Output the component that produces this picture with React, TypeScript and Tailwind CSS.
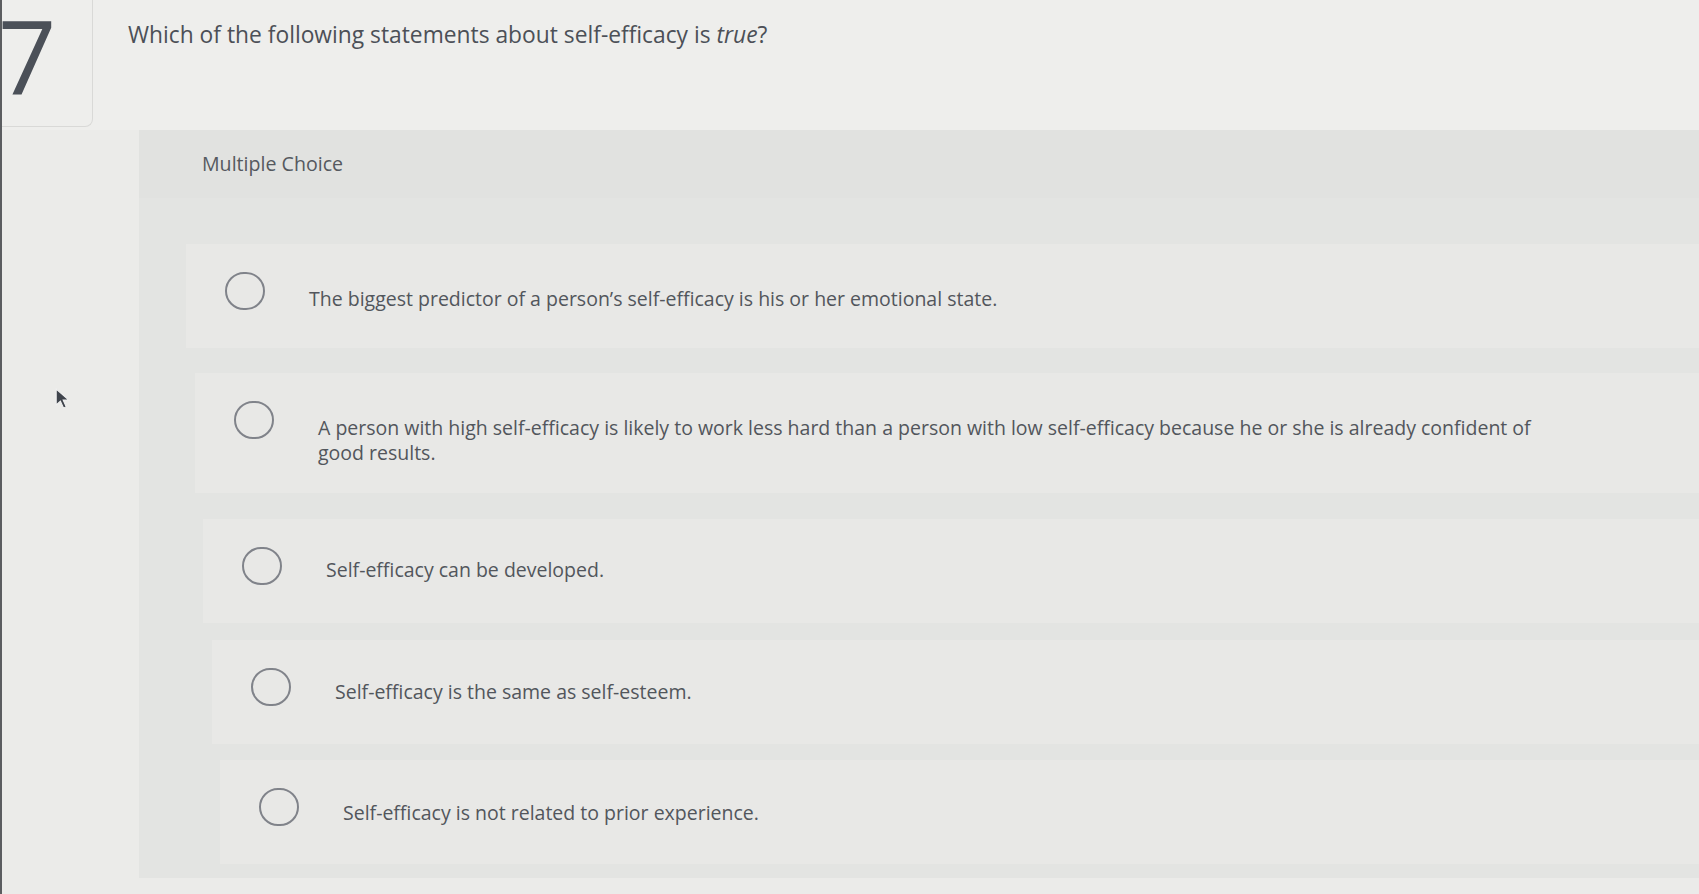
const choices = [
  { text: "The biggest predictor of a person’s self-efficacy is his or her emotional state.", row: "mt-[46px] ml-[47px] h-[104px]", textPad: "pt-[42px]" },
  { text: "A person with high self-efficacy is likely to work less hard than a person with low self-efficacy because he or she is already confident of good results.", row: "mt-[25px] ml-[56px] h-[120px]", textPad: "pt-[42px]" },
  { text: "Self-efficacy can be developed.", row: "mt-[26px] ml-[64px] h-[104px]", textPad: "pt-[38px]" },
  { text: "Self-efficacy is the same as self-esteem.", row: "mt-[17px] ml-[73px] h-[104px]", textPad: "pt-[39px]" },
  { text: "Self-efficacy is not related to prior experience.", row: "mt-[16px] ml-[81px] h-[104px]", textPad: "pt-[40px]" },
];

export default function App() {
  return (
    <div
      className="relative w-[1699px] h-[894px] overflow-hidden bg-[#ebebe9] border-l-2 border-[#5b5d60] text-[#52565c]"
      style={{ fontFamily: "'Open Sans', Lato, sans-serif" }}
    >
      {/* Header */}
      <div className="flex h-[130px] bg-[#eeeeec]">
        <div className="w-[91px] h-[127px] shrink-0 border-r border-b border-[#d9d9d7] rounded-br-[8px] overflow-hidden">
          <div className="ml-[-4px] mt-[5px] text-[102px] leading-none font-medium text-[#4b5058]">7</div>
        </div>
        <h1 className="ml-[35px] mt-[20px] text-[22.8px] leading-[30px] text-[#4c5057]">
          Which of the following statements about self-efficacy is <em>true</em>?
        </h1>
      </div>

      {/* Question panel */}
      <div className="ml-[137px] h-[748px] bg-[#e3e4e2]">
        <div className="h-[68px] flex items-center pl-[63px] bg-[#e1e2e0]">
          <span className="text-[19.6px] text-[#55595f]">Multiple Choice</span>
        </div>

        {choices.map((c, i) => (
          <div key={i} className={`${c.row} flex items-start bg-[#e8e8e6]`}>
            <div className="pl-[39px] pt-[28px] shrink-0">
              <div className="w-[40px] h-[38px] rounded-full border-2 border-[#80838a]" />
            </div>
            <p className={`pl-[44px] ${c.textPad} max-w-[1304px] text-[19.5px] leading-[25px]`}>
              {c.text}
            </p>
          </div>
        ))}
      </div>

      {/* mouse pointer */}
      <svg className="absolute left-[52px] top-[388px]" width="17" height="21" viewBox="0 0 16 20">
        <path d="M2 1 L2 16 L6 12.5 L9 19 L11.5 18 L8.6 11.5 L14 11.5 Z" fill="#3f444c" stroke="#f0f0f0" strokeWidth="1" />
      </svg>
    </div>
  );
}
